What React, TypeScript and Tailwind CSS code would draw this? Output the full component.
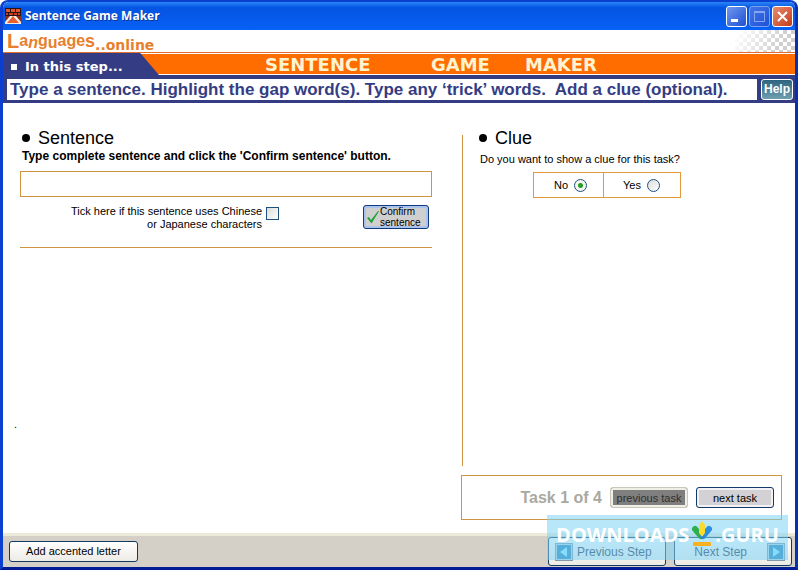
import React, { useState } from "react";

type ClueChoice = "no" | "yes";

const AppIcon: React.FC = () => (
  <svg viewBox="0 0 16 16" className="h-4 w-4 shrink-0" aria-hidden="true">
    <rect width="16" height="16" fill="#2b1512" />
    <path d="M1 1h4v3H1zM6 1h4v3H6zM11 1h4v3h-4z" fill="#e2552c" />
    <path d="M1 5h2v2H1zM4 5h4v2H4zM9 5h3v2H9zM13 5h2v2h-2z" fill="#c8401f" />
    <rect y="8" width="16" height="8" fill="#f6e9e2" />
    <path d="M0 8h5L0 14zM11 8h5v6z" fill="#8c2f1a" />
    <path d="M8 8l6 7H2z" fill="#e8602f" />
  </svg>
);

const WindowControls: React.FC = () => (
  <div className="flex gap-0.5">
    <button
      aria-label="Minimize"
      className="h-[21px] w-[21px] rounded-[3px] border border-white bg-linear-to-br from-[#6f96f0] to-[#1f4fd0]"
    >
      <svg viewBox="0 0 19 19" aria-hidden="true">
        <path d="M4 12h7v3H4z" fill="#fff" />
      </svg>
    </button>
    <button
      aria-label="Maximize"
      className="h-[21px] w-[21px] rounded-[3px] border border-[#7d9ff0] bg-linear-to-br from-[#4273e6] to-[#1e52d8]"
    >
      <svg viewBox="0 0 19 19" aria-hidden="true">
        <path d="M4.5 5.5h10v9h-10z" fill="none" stroke="#86a5f2" />
        <path d="M4 4h11v2H4z" fill="#86a5f2" />
      </svg>
    </button>
    <button
      aria-label="Close"
      className="h-[21px] w-[21px] rounded-[3px] border border-white bg-linear-to-br from-[#e98a6c] to-[#c23a13]"
    >
      <svg viewBox="0 0 19 19" aria-hidden="true">
        <path d="M5 5l9 9M14 5l-9 9" stroke="#fff" strokeWidth="2" />
      </svg>
    </button>
  </div>
);

const Checkers: React.FC = () => (
  <svg viewBox="0 0 60 22" className="h-[22px] w-[60px]" aria-hidden="true">
    <defs>
      <pattern id="checks" width="8" height="8" patternUnits="userSpaceOnUse">
        <path d="M0 0h4v4H0zM4 4h4v4H4z" fill="#cfcfcf" />
      </pattern>
      <linearGradient id="fade" x1="0" y1="0" x2="1" y2="0.2">
        <stop offset="0.05" stopColor="#fff" />
        <stop offset="0.85" stopColor="#fff" stopOpacity="0" />
      </linearGradient>
    </defs>
    <rect width="60" height="22" fill="url(#checks)" />
    <rect width="60" height="22" fill="url(#fade)" />
  </svg>
);

const Logo: React.FC = () => (
  <div
    aria-label="Languages..online"
    className="flex h-[22px] items-end pl-1 text-[16px] leading-[18px] font-bold text-[#e87f2e]"
  >
    <span className="text-[20px] leading-[22px]">L</span>
    <span className="mb-0.5">a</span>
    <span className="italic">n</span>
    <span className="mb-0.5">g</span>
    <span>u</span>
    <span className="mb-0.5">a</span>
    <span className="mb-0.5">g</span>
    <span className="mb-0.5">e</span>
    <span className="mb-0.5 text-[18px]">s</span>
    <span className="font-['DejaVu_Sans'] text-[14px] leading-[14px]">
      ..online
    </span>
  </div>
);

const TitleBar: React.FC = () => (
  <header className="flex h-7 items-center bg-linear-to-b from-[#2b86f7] via-[#0554e2] via-20% to-[#0661f5] px-0.5">
    <AppIcon />
    <h1 className="ml-1 flex-1 font-['Open_Sans'] text-[12px] font-bold text-white [text-shadow:1px_1px_#0b3596]">
      Sentence Game Maker
    </h1>
    <WindowControls />
  </header>
);

const Banner: React.FC = () => (
  <div>
    <div className="flex h-[23px] items-end justify-between border-b border-[#e0702a] bg-white">
      <Logo />
      <Checkers />
    </div>
    <div className="flex h-[22px] items-center border-y border-white bg-[#ff6c00]">
      <div className="flex h-[22px] w-[156px] shrink-0 items-center gap-2 bg-[#343d83] pt-1.5 pl-2 [clip-path:polygon(0_0,88%_0,100%_100%,0_100%)]">
        <span className="h-1.5 w-1.5 bg-white" />
        <span className="font-['DejaVu_Sans'] text-[13px] leading-4 font-bold text-white">
          In this step...
        </span>
      </div>
      <div className="flex flex-1 pt-0.5 pl-[106px] font-['DejaVu_Sans'] text-[18px] leading-[18px] font-bold text-[#fff3d0]">
        <span className="w-[166px]">SENTENCE</span>
        <span className="w-[94px]">GAME</span>
        <span>MAKER</span>
      </div>
    </div>
    <div className="flex h-[28px] items-center bg-[#343d83] pr-0.5 pl-1">
      <p className="mr-1 flex-1 bg-white pl-[3px] text-[17px] leading-[21px] font-bold whitespace-pre text-[#343d83]">
        Type a sentence. Highlight the gap word(s). Type any ‘trick’ words.  Add
        a clue (optional).
      </p>
      <button className="h-[21px] w-8 rounded-[3px] border border-white bg-linear-to-b from-[#2c6480] to-[#6fa0b0] text-[12px] leading-4 font-bold text-white">
        Help
      </button>
    </div>
  </div>
);

const SentencePanel: React.FC = () => {
  const [sentence, setSentence] = useState("");
  const [asian, setAsian] = useState(false);

  return (
    <section className="flex flex-col">
      <h2 className="flex items-center gap-2 pl-0.5 text-[18px] leading-[22px]">
        <span className="h-2 w-2 rounded-full bg-black" />
        Sentence
      </h2>
      <label
        htmlFor="sentence"
        className="pl-0.5 text-[12px] leading-[14px] font-bold"
      >
        Type complete sentence and click the 'Confirm sentence' button.
      </label>
      <input
        id="sentence"
        type="text"
        value={sentence}
        onChange={(e) => setSentence(e.target.value)}
        className="mt-2 h-[26px] w-full border border-[#cf9440] px-1 text-[14px] outline-none"
      />

      <div className="flex items-start pt-2 pr-[3px] pb-4">
        <label
          htmlFor="asian"
          className="w-[242px] text-right text-[11px] leading-[13px]"
        >
          Tick here if this sentence uses Chinese
          <br />
          or Japanese characters
        </label>
        <input
          id="asian"
          type="checkbox"
          checked={asian}
          onChange={(e) => setAsian(e.target.checked)}
          className="mt-0.5 ml-1 h-[13px] w-[13px] appearance-none border border-[#1c5180] bg-linear-to-br from-[#dcdcd7] to-white checked:bg-[#21a121]"
        />
        <button className="ml-auto flex h-6 w-[66px] items-center rounded-[3px] border border-[#123a7a] bg-[#cfcfcf] pl-0.5 text-left text-[10px] leading-[11px] shadow-[inset_0_0_0_2px_#a9c2ee]">
          <svg viewBox="0 0 14 14" className="h-3.5 w-3.5 shrink-0" aria-hidden="true">
            <path d="M1 8l2-1 2 3L12 1l1 .3L5.500 13.500z" fill="#21a338" />
          </svg>
          <span>
            Confirm
            <br />
            sentence
          </span>
        </button>
      </div>
      <hr className="border-[#cf9440]" />
      <p className="mt-auto mb-[90px] -ml-1.5 text-[11px] leading-3">.</p>
    </section>
  );
};

const radioStyle =
  "h-[13px] w-[13px] appearance-none rounded-full border border-[#1c5180] bg-linear-to-br from-[#dcdcd7] to-white checked:bg-[radial-gradient(#21a121_2px,#f4f4f0_3px)]";

const CluePanel: React.FC = () => {
  const [clue, setClue] = useState<ClueChoice>("no");

  return (
    <section className="flex flex-col">
      <div className="flex flex-1">
        <div className="mt-2 ml-px w-px bg-[#cf9440]" />
        <div className="pl-4">
          <h2 className="flex items-center gap-2 text-[18px] leading-[22px]">
            <span className="h-2 w-2 rounded-full bg-black" />
            Clue
          </h2>
          <p className="pt-[3px] pb-px pl-px text-[11px] leading-[14px]">
            Do you want to show a clue for this task?
          </p>
          <div className="mt-[5px] ml-[54px] flex h-[26px] w-[148px] border border-[#e09a3a] text-[11px]">
            <label className="flex w-[70px] items-center justify-end gap-1.5 border-r border-[#e09a3a] pr-4">
              No
              <input
                type="radio"
                name="clue"
                checked={clue === "no"}
                onChange={() => setClue("no")}
                className={radioStyle}
              />
            </label>
            <label className="flex flex-1 items-center justify-end gap-1.5 pr-5">
              Yes
              <input
                type="radio"
                name="clue"
                checked={clue === "yes"}
                onChange={() => setClue("yes")}
                className={radioStyle}
              />
            </label>
          </div>
        </div>
      </div>

      <div className="mt-[9px] flex h-[45px] items-center justify-end border border-[#cf9440] pr-[7px]">
        <span className="mr-2 text-[16px] font-bold text-[#aaa99f]">
          Task 1 of 4
        </span>
        <button
          disabled
          className="mr-2 h-[21px] w-[78px] rounded-[3px] border border-[#c9c7ba] bg-[#7f7f7f] text-[11px] leading-4 text-[#303030] shadow-[inset_0_0_0_2px_#f0efe6]"
        >
          previous task
        </button>
        <button className="h-[21px] w-[78px] rounded-[3px] border border-[#123a6a] bg-[#d3d1d3] text-[11px] leading-4 shadow-[inset_0_0_0_2px_#f2f2f4]">
          next task
        </button>
      </div>
    </section>
  );
};

const StepArrow: React.FC<{ back?: boolean }> = ({ back }) => (
  <svg viewBox="0 0 18 18" className="h-[18px] w-[18px] shrink-0" aria-hidden="true">
    <rect x=".5" y=".5" width="17" height="17" fill="#b8d3e0" stroke="#8297a8" />
    <rect x="2" y="2" width="14" height="14" fill="#2581b8" />
    <path d={back ? "M12 4v10L5 9z" : "M6 4v10l7-5z"} fill="#8fe6ff" />
  </svg>
);

const Footer: React.FC = () => (
  <footer className="flex h-[34px] items-center border-t-[3px] border-[#ece9d8] bg-[#d4d0c8] pr-[3px] pl-1.5">
    <button className="h-[21px] w-[129px] rounded-[3px] border border-[#123a5c] bg-linear-to-b from-white to-[#ecebe5] text-[11px]">
      Add accented letter
    </button>
    <div className="ml-auto flex gap-2">
      <button className="flex h-[29px] w-[118px] items-center gap-1 rounded-[3px] border border-[#123a5c] bg-linear-to-b from-white to-[#ecebe5] pl-1.5 text-[12px] leading-3 text-[#1f2f4a]">
        <StepArrow back />
        Previous Step
      </button>
      <button className="flex h-[29px] w-[118px] items-center justify-end gap-5 rounded-[3px] border border-[#123a5c] bg-linear-to-b from-white to-[#ecebe5] pr-1.5 text-[12px] leading-3 text-[#1f2f4a]">
        Next Step
        <StepArrow />
      </button>
    </div>
  </footer>
);

const Watermark: React.FC = () => (
  <div className="pointer-events-none absolute right-[7px] bottom-[7px] flex h-[45px] w-[241px] items-start justify-center bg-[#7fd3f5]/55 font-['Open_Sans'] text-[20px] leading-5 font-bold text-white">
    <span className="pt-2.5">DOWNLOADS</span>
    <svg viewBox="0 0 22 26" className="mx-0.5 mt-1.5 h-[26px] w-[22px] shrink-0" aria-hidden="true">
      <path d="M4 8l6 7" stroke="#2fae4e" strokeWidth="6" strokeLinecap="round" />
      <path d="M18 8l-6 7" stroke="#2d8fdf" strokeWidth="6" strokeLinecap="round" />
      <path d="M11 0l3 4v8l-3 4-3-4V4z" fill="#fbdc2c" />
      <path d="M8 14l3 4 3-4-3 2z" fill="#1f7fc4" />
      <rect x="2" y="21" width="18" height="4" rx="1" fill="#f9b01e" />
    </svg>
    <span className="pt-2.5">.GURU</span>
  </div>
);

export default function App() {
  return (
    <div className="relative flex min-h-screen flex-col overflow-hidden rounded-t-lg border-[3px] border-t-2 border-[#0a3fd0] border-r-[#0831b0] border-b-[#001c94] bg-white font-['Liberation_Sans',sans-serif] text-black">
      <TitleBar />
      <Banner />
      <main className="grid flex-1 grid-cols-[412fr_321fr] gap-[29px] pt-6 pr-[13px] pb-[13px] pl-[17px]">
        <SentencePanel />
        <CluePanel />
      </main>
      <Footer />
      <Watermark />
    </div>
  );
}
